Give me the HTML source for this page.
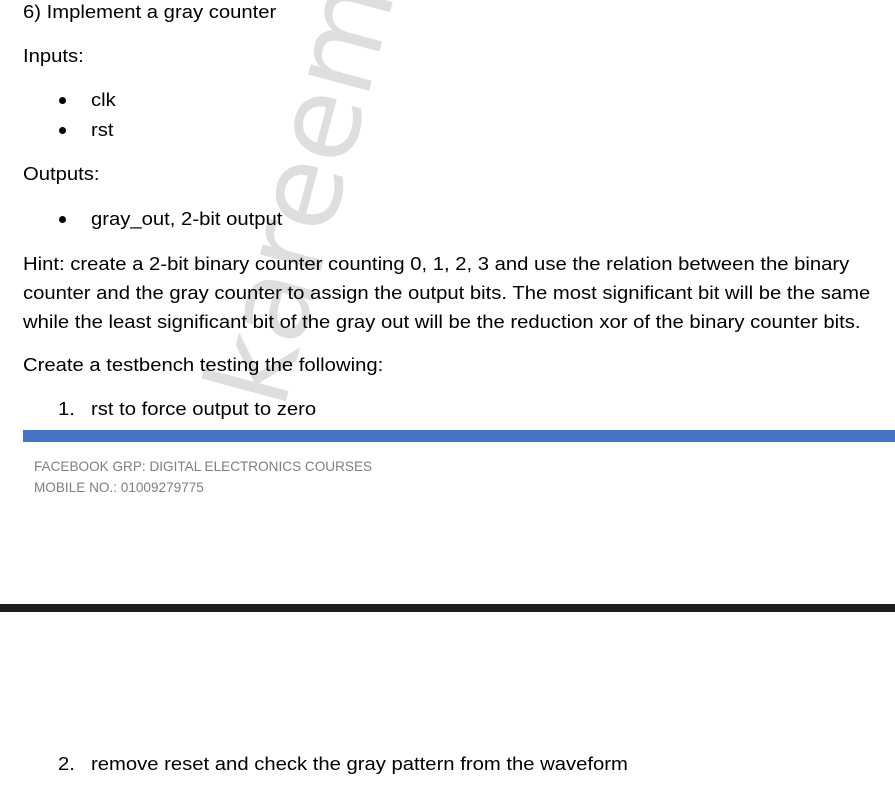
<!DOCTYPE html>
<html><head><style>
body{margin:0;width:895px;height:785px;background:#fff;position:relative;overflow:hidden;font-family:"Liberation Sans",sans-serif;color:#000}
.t{position:absolute;white-space:nowrap;font-size:18px;line-height:20px;transform:scaleX(1.125);transform-origin:0 50%}
.b{position:absolute;width:7px;height:7px;border-radius:50%;background:#000}
.wm{position:absolute;left:302px;top:192px;width:0;height:0}
.wm span{position:absolute;left:0;top:0;font-size:115px;line-height:115px;color:#dedede;transform:translate(-50%,-50%) rotate(-75deg);white-space:nowrap;font-family:"DejaVu Sans",sans-serif}
.f{position:absolute;left:34px;font-size:14px;color:#7f7f7f;white-space:nowrap;transform:scaleX(0.97);transform-origin:0 50%}
.n{position:absolute;white-space:nowrap;font-size:18px;line-height:20px}
</style></head><body>
<div class="wm"><span>kareem</span></div>
<div class="t" style="left:23px;top:2px">6) Implement a gray counter</div>
<div class="t" style="left:23px;top:46px">Inputs:</div>
<div class="b" style="left:59px;top:97px"></div>
<div class="t" style="left:91px;top:90px">clk</div>
<div class="b" style="left:59px;top:127px"></div>
<div class="t" style="left:91px;top:120px">rst</div>
<div class="t" style="left:23px;top:164px">Outputs:</div>
<div class="b" style="left:59px;top:216px"></div>
<div class="t" style="left:91px;top:209px">gray_out, 2-bit output</div>
<div class="t" style="left:23px;top:254px">Hint: create a 2-bit binary counter counting 0, 1, 2, 3 and use the relation between the binary</div>
<div class="t" style="left:23px;top:283px">counter and the gray counter to assign the output bits. The most significant bit will be the same</div>
<div class="t" style="left:23px;top:312px">while the least significant bit of the gray out will be the reduction xor of the binary counter bits.</div>
<div class="t" style="left:23px;top:355px">Create a testbench testing the following:</div>
<div class="t" style="left:58px;top:399px">1.</div>
<div class="t" style="left:91px;top:399px">rst to force output to zero</div>
<div style="position:absolute;left:23px;top:430px;width:872px;height:12px;background:#4472c4"></div>
<div class="f" style="top:458px">FACEBOOK GRP: DIGITAL ELECTRONICS COURSES</div>
<div class="f" style="top:479px">MOBILE NO.: 01009279775</div>
<div style="position:absolute;left:0;top:604px;width:895px;height:8px;background:#1e1e1e"></div>
<div class="t" style="left:58px;top:754px">2.</div>
<div class="t" style="left:91px;top:754px">remove reset and check the gray pattern from the waveform</div>
</body></html>
